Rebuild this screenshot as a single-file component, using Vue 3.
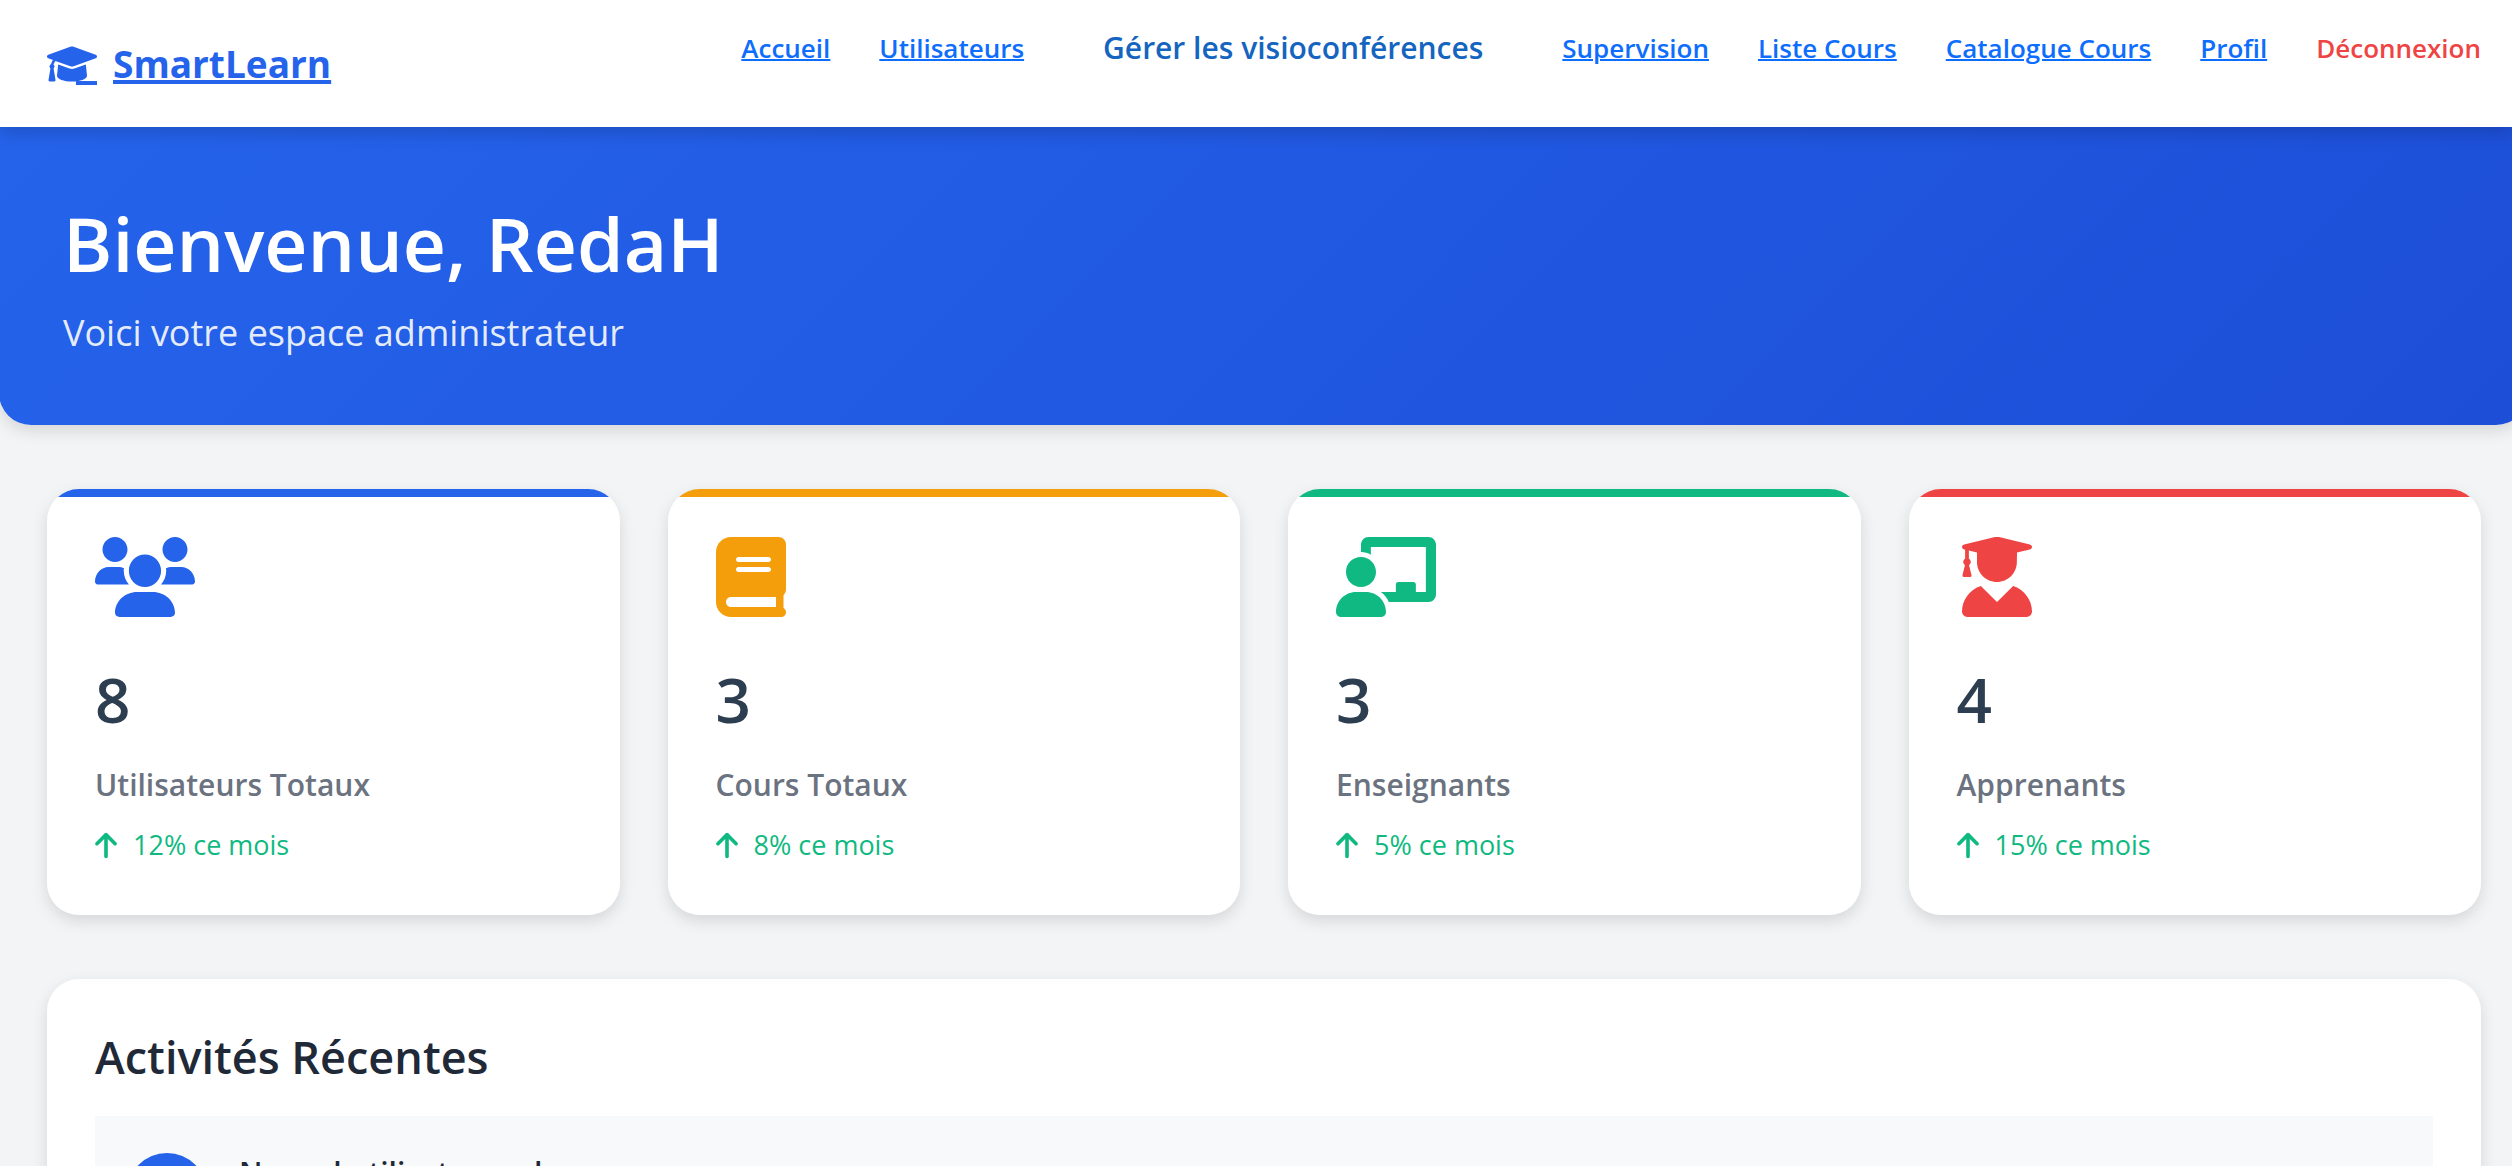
<script setup>
const navLinks = [
  { label: 'Accueil' },
  { label: 'Utilisateurs' },
  { label: 'Gérer les visioconférences', kind: 'featured' },
  { label: 'Supervision' },
  { label: 'Liste Cours' },
  { label: 'Catalogue Cours' },
  { label: 'Profil' },
  { label: 'Déconnexion', kind: 'logout' },
]

const stats = [
  {
    value: 8,
    label: 'Utilisateurs Totaux',
    trend: '12% ce mois',
    tone: 'blue',
    box: '0 0 640 512',
    path: 'M319.9 320c57.41 0 103.1-46.56 103.1-104c0-57.44-46.54-104-103.1-104c-57.41 0-103.1 46.56-103.1 104C215.9 273.4 262.5 320 319.9 320zM369.9 352H270.1C191.6 352 128 411.7 128 485.3C128 500.1 140.7 512 156.4 512h327.2C499.3 512 512 500.1 512 485.3C512 411.7 448.4 352 369.9 352zM512 160c44.18 0 80-35.82 80-80S556.2 0 512 0c-44.18 0-80 35.82-80 80S467.8 160 512 160zM183.9 216c0-5.449 .9824-10.63 1.609-15.91C174.6 194.1 162.6 192 149.9 192H88.08C39.44 192 0 233.8 0 285.3C0 295.6 7.887 304 17.62 304h199.5C196.7 280.2 183.9 249.7 183.9 216zM128 160c44.18 0 80-35.82 80-80S172.2 0 128 0C83.82 0 48 35.82 48 80S83.82 160 128 160zM551.9 192h-61.84c-12.8 0-24.88 3.037-35.86 8.24C454.8 205.5 455.8 210.6 455.8 216c0 33.71-12.78 64.21-33.16 88h199.7C632.1 304 640 295.6 640 285.3C640 233.8 600.6 192 551.9 192z',
  },
  {
    value: 3,
    label: 'Cours Totaux',
    trend: '8% ce mois',
    tone: 'amber',
    box: '0 0 448 512',
    path: 'M448 336v-288C448 21.49 426.5 0 400 0H96C42.98 0 0 42.98 0 96v320c0 53.02 42.98 96 96 96h320c17.67 0 32-14.33 32-31.1c0-11.72-6.607-21.52-16-27.1v-81.36C441.8 362.8 448 350.2 448 336zM143.1 128h192C344.8 128 352 135.2 352 144C352 152.8 344.8 160 336 160H143.1C135.2 160 128 152.8 128 144C128 135.2 135.2 128 143.1 128zM143.1 192h192C344.8 192 352 199.2 352 208C352 216.8 344.8 224 336 224H143.1C135.2 224 128 216.8 128 208C128 199.2 135.2 192 143.1 192zM384 448H96c-17.67 0-32-14.33-32-32c0-17.67 14.33-32 32-32h288V448z',
  },
  {
    value: 3,
    label: 'Enseignants',
    trend: '5% ce mois',
    tone: 'green',
    box: '0 0 640 512',
    path: 'M592 0h-384C181.5 0 160 22.25 160 49.63V96c23.42 0 45.1 6.781 63.1 17.81V64h352v288h-64V304c0-8.838-7.164-16-16-16h-96c-8.836 0-16 7.162-16 16V352H287.3c22.07 16.48 39.54 38.5 50.76 64h253.9C618.5 416 640 393.8 640 366.4V49.63C640 22.25 618.5 0 592 0zM160 320c53.02 0 96-42.98 96-96c0-53.02-42.98-96-96-96C106.1 128 64 170.1 64 224C64 277 106.1 320 160 320zM192 352H128c-70.69 0-128 57.31-128 128c0 17.67 14.33 32 32 32h256c17.67 0 32-14.33 32-32C320 409.3 262.7 352 192 352z',
  },
  {
    value: 4,
    label: 'Apprenants',
    trend: '15% ce mois',
    tone: 'red',
    box: '0 0 512 512',
    path: 'M45.63 79.75L52 81.25v58.5C45 143.9 40 151.3 40 160c0 8.375 4.625 15.38 11.12 19.75L35.5 242C33.75 248.9 37.63 256 43.13 256h41.75c5.5 0 9.375-7.125 7.625-13.1L76.88 179.8C83.38 175.4 88 168.4 88 160c0-8.75-5-16.12-12-20.25V87.13L128 99.63l.001 60.37c0 70.75 57.25 128 128 128s127.1-57.25 127.1-128L384 99.62l82.25-19.87c18.25-4.375 18.25-27 0-31.5l-190.4-46c-13-3-26.62-3-39.63 0l-190.6 46C27.5 52.63 27.5 75.38 45.63 79.75zM359.2 312.8l-103.2 103.2l-103.2-103.2c-69.93 22.3-120.8 87.2-120.8 164.5C32 496.5 47.53 512 66.67 512h378.7C464.5 512 480 496.5 480 477.3C480 400 429.1 335.1 359.2 312.8z',
  },
]

const activities = [{ title: 'Nouvel utilisateur ad' }]
</script>

<template>
  <div class="page">
    <header class="topbar">
      <a class="brand" href="#">
        <svg class="brand-icon" viewBox="0 0 640 512" aria-hidden="true">
          <path d="M623.1 136.9l-282.7-101.2c-13.73-4.91-28.7-4.91-42.6 0L16.05 136.9C6.438 140.4 0 149.6 0 160s6.438 19.65 16.05 23.09L76.07 204.6c-11.89 15.8-20.26 34.16-24.55 53.95C40.05 263.4 32 274.8 32 288c0 9.953 4.814 18.49 11.94 24.36l-24.83 149C17.48 471.1 25 480 34.89 480H93.11c9.887 0 17.41-8.879 15.78-18.63l-24.83-149C91.19 306.5 96 297.1 96 288c0-10.29-5.174-19.03-12.72-24.89c4.252-17.76 12.88-33.82 24.94-47.03l190.6 68.23c13.73 4.91 28.7 4.91 42.6 0l282.7-101.2C633.6 179.6 640 170.4 640 160S633.6 140.4 623.1 136.9zM351.1 314.4C341.7 318.5 330.9 320 320 320c-10.92 0-21.69-1.867-32-5.555L142.8 262.5L128 405.3C128 446.6 213.1 480 320 480c105.1 0 192-33.4 192-74.67l-14.78-142.9L351.1 314.4z" />
          <rect x="371" y="474" width="269" height="51" />
        </svg>
        <span class="brand-name">SmartLearn</span>
      </a>
      <nav class="nav" aria-label="Navigation principale">
        <a v-for="link in navLinks" :key="link.label" href="#" class="nav-link" :class="link.kind">{{ link.label }}</a>
      </nav>
    </header>

    <section class="hero">
      <h1>Bienvenue, RedaH</h1>
      <p>Voici votre espace administrateur</p>
    </section>

    <main class="content">
      <section class="stats">
        <article v-for="stat in stats" :key="stat.label" class="card" :class="stat.tone">
          <svg class="card-icon" :viewBox="stat.box" aria-hidden="true"><path :d="stat.path" /></svg>
          <div class="value">{{ stat.value }}</div>
          <div class="label">{{ stat.label }}</div>
          <div class="trend">
            <svg class="arrow" viewBox="0 0 384 512" aria-hidden="true">
              <path d="M374.6 246.6C368.4 252.9 360.2 256 352 256s-16.38-3.125-22.62-9.375L224 141.3V448c0 17.69-14.33 31.1-31.1 31.1S160 465.7 160 448V141.3L54.63 246.6c-12.5 12.5-32.75 12.5-45.25 0s-12.5-32.75 0-45.25l160-160c12.5-12.5 32.75-12.5 45.25 0l160 160C387.1 213.9 387.1 234.1 374.6 246.6z" />
            </svg>
            <span>{{ stat.trend }}</span>
          </div>
        </article>
      </section>

      <section class="panel">
        <h2>Activités Récentes</h2>
        <ul class="activities">
          <li v-for="item in activities" :key="item.title" class="activity">
            <span class="dot"></span>
            <h3>{{ item.title }}</h3>
          </li>
        </ul>
      </section>
    </main>
  </div>
</template>

<style>
body {
  margin: 0;
  background: #f3f4f6;
}
</style>

<style scoped>
.page {
  height: 100vh;
  overflow: hidden;
  background: #f3f4f6;
  color: #1f2937;
  font-family: "Open Sans", "Noto Sans", sans-serif;
}

.topbar {
  position: relative;
  z-index: 1;
  display: flex;
  justify-content: space-between;
  height: 127px;
  box-sizing: border-box;
  padding: 0 31px 0 47px;
  background: #fff;
  box-shadow: 0 6px 16px rgba(0, 0, 0, 0.16);
}

.brand {
  display: flex;
  align-items: center;
  gap: 16px;
  color: #2563eb;
  text-decoration: none;
}

.brand-icon {
  width: 50px;
  height: 40px;
  overflow: visible;
  fill: currentColor;
}

.brand-name {
  font-size: 37px;
  font-weight: 700;
  text-decoration: underline;
  text-decoration-thickness: 4px;
}

.nav {
  display: flex;
  align-items: flex-start;
  gap: 49px;
  padding-top: 28px;
}

.nav-link {
  color: #0d6efd;
  font-size: 26px;
  font-weight: 600;
  line-height: 40px;
  white-space: nowrap;
  text-decoration: underline;
  text-decoration-thickness: 2px;
}

.nav-link.featured {
  padding: 0 30px;
  color: #1565c0;
  font-size: 30px;
  text-decoration: none;
}

.nav-link.logout {
  color: #ef4444;
  text-decoration: none;
}

.hero {
  margin: 0 -16px 0 -1px;
  box-sizing: border-box;
  height: 298px;
  padding: 64px;
  border-radius: 0 0 32px 32px;
  background: linear-gradient(135deg, #2563eb, #1d4ed8);
  box-shadow: 0 6px 16px rgba(0, 0, 0, 0.12);
  color: #fff;
}

.hero h1 {
  margin: 0;
  font-size: 75px;
  font-weight: 600;
  line-height: 104px;
}

.hero p {
  margin: 12px 0 0;
  color: rgba(255, 255, 255, 0.9);
  font-size: 36px;
  line-height: 52px;
}

.content {
  padding: 64px 31px 64px 47px;
}

.stats {
  display: grid;
  grid-template-columns: repeat(4, 1fr);
  gap: 48px;
}

.card {
  box-sizing: border-box;
  height: 426px;
  padding: 48px;
  border-radius: 32px;
  background: linear-gradient(var(--tone) 8px, #fff 8px);
  box-shadow: 0 6px 16px rgba(0, 0, 0, 0.12);
}

.blue { --tone: #2563eb; }
.amber { --tone: #f59e0b; }
.green { --tone: #10b981; }
.red { --tone: #ef4444; }

.card-icon {
  display: block;
  height: 80px;
  fill: var(--tone);
}

.value {
  margin-top: 32px;
  color: #2c3e50;
  font-size: 62px;
  font-weight: 600;
  line-height: 100px;
}

.label {
  margin-top: 12px;
  color: #6b7280;
  font-size: 30px;
  font-weight: 600;
  line-height: 48px;
}

.trend {
  display: flex;
  align-items: center;
  gap: 16px;
  margin-top: 16px;
  color: #10b981;
  font-size: 27px;
  line-height: 40px;
}

.arrow {
  width: 22px;
  height: 29px;
  fill: currentColor;
}

.panel {
  margin-top: 64px;
  padding: 48px;
  border-radius: 32px;
  background: #fff;
  box-shadow: 0 6px 16px rgba(0, 0, 0, 0.12);
}

.panel h2 {
  margin: 0;
  font-size: 45px;
  font-weight: 600;
  line-height: 60px;
}

.activities {
  margin: 29px 0 0;
  padding: 0;
  list-style: none;
}

.activity {
  display: flex;
  align-items: flex-start;
  gap: 32px;
  padding: 37px 32px;
  background: #f8f9fb;
}

.dot {
  width: 80px;
  height: 80px;
  border-radius: 50%;
  background: #2563eb;
}

.activity h3 {
  margin: 0;
  font-size: 30px;
  font-weight: 600;
  line-height: 40px;
}
</style>
